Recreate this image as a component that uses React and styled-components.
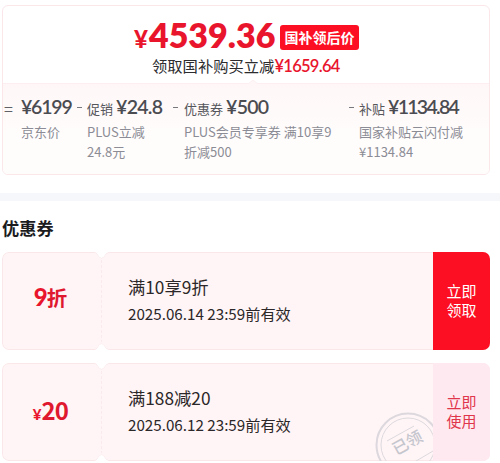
import React from 'react';
import styled, { createGlobalStyle } from 'styled-components';

const GlobalStyle = createGlobalStyle`
* { box-sizing: border-box; }
body {
  margin: 0;
  background: #fff;
  overflow: hidden;
  font-family: "Noto Sans CJK SC", sans-serif;
}
`
const Page = styled.div`
width: 500px;
height: 463px;
overflow: hidden;
background: #fff;
`
const PriceCard = styled.section`
width: 488px;
height: 170px;
margin: 5px 0 0 2px;
border: 1px solid #fbe7ea;
border-radius: 6px;
overflow: hidden;
`
const PriceTop = styled.div`
height: 77px;
padding-top: 10px;
`
const PriceRow = styled.div`
display: flex;
align-items: center;
height: 38px;
padding-left: 131px;
`
const Amount = styled.span`
font-family: Lato, "Noto Sans CJK SC", sans-serif;
font-size: ${(props) => props.$size}px;
font-weight: ${(props) => props.$weight || 700};
line-height: 1;
letter-spacing: ${(props) => props.$spacing || 0}px;
color: ${(props) => props.$color || '#e9152d'};
white-space: nowrap;
`
const BigPrice = styled.div`
display: flex;
align-items: baseline;
width: 146px;
gap: 1px;
`
const Tag = styled.span`
width: 79px;
height: 25px;
border-radius: 3px;
background: #fd0f23;
color: #fff;
font-size: 14px;
font-weight: 700;
line-height: 24px;
text-align: center;
margin-top: 4px;
`
const SubRow = styled.div`
display: flex;
align-items: baseline;
padding-left: 149px;
font-size: 15.3px;
line-height: 22px;
color: #2c2c2e;
`
const Formula = styled.div`
position: relative;
display: grid;
grid-template-columns: 18px 66px 97px 175px 1fr;
height: 91px;
padding-top: 12px;
border-top: 1px solid #fdeff1;
background: linear-gradient(#fff7f7, #fffcfc 55%);
`
const Caret = styled.svg`
position: absolute;
left: 243px;
top: -5px;
`
const Sign = styled.span`
font-size: 16px;
line-height: 24px;
color: #606166;
padding-left: 1px;
`
const Term = styled.div`
position: relative;
`
const TermHead = styled.div`
display: flex;
align-items: baseline;
gap: 3px;
height: 26px;
padding-top: 1px;
font-size: 13px;
line-height: 24px;
color: #55565b;
white-space: nowrap;
`
const Minus = styled.i`
position: absolute;
left: ${(props) => -props.$offset}px;
top: 11px;
width: 5px;
height: 1px;
background: #77787d;
`
const TermNote = styled.div`
font-size: 13px;
line-height: 20px;
color: #8b8c95;
white-space: pre;
`
const Band = styled.div`
height: 8px;
margin-top: 18px;
background: #f5f7fb;
`
const Title = styled.h2`
margin: 0;
padding: 14px 0 0 2px;
height: 51px;
font-size: 17.2px;
font-weight: 700;
line-height: 26px;
color: #1c1c1e;
`
const Coupon = styled.article`
position: relative;
display: flex;
width: 488px;
height: 98px;
margin: 0 0 13px 2px;
border-radius: 7px;
background: #fff5f6;
overflow: hidden;
`
const Outline = styled.svg`
position: absolute;
inset: 0;
`
const Value = styled.div`
position: relative;
display: flex;
align-items: baseline;
justify-content: center;
width: 100px;
padding-top: ${(props) => props.$top}px;
padding-right: 3px;
color: #e0182f;
font-size: ${(props) => props.$size}px;
font-weight: 700;
letter-spacing: ${(props) => props.$spacing || 0}px;
line-height: 28px;
`
const Info = styled.div`
position: relative;
flex: 1;
padding: 21px 0 0 26px;
color: #2c2728;
`
const Rule = styled.div`
font-size: 17.3px;
line-height: 27px;
`
const Expiry = styled.div`
font-size: 15.2px;
line-height: 26px;
`
const Action = styled.button`
position: relative;
width: 57px;
border: 0;
padding: 0 0 2px;
background: ${(props) => props.$used ? '#ffe9f0' : '#fd0f23'};
color: ${(props) => props.$used ? '#e0364b' : '#fff'};
font-family: inherit;
font-size: 15px;
line-height: 19.5px;
cursor: pointer;
`
const Stamp = styled.svg`
position: absolute;
right: 57px;
bottom: 0;
`

const terms = [
  { name: '', value: '¥6199', note: '京东价', spacing: -1.2 },
  { name: '促销', value: '¥24.8', note: 'PLUS立减\n24.8元', spacing: -0.7, offset: 10 },
  { name: '优惠券', value: '¥500', note: 'PLUS会员专享券 满10享9\n折减500', spacing: -0.7, offset: 11 },
  { name: '补贴', value: '¥1134.84', note: '国家补贴云闪付减\n¥1134.84', spacing: -1.7, offset: 10 },
]

const CouponCard = ({ value, unit, suffix, rule, expiry, action, used }) => (
  <Coupon>
    <Outline width="488" height="98" fill="none">
      <path
        d="M7 .5H93Q95 .5 96 3Q99.5 9 103 3Q104 .5 107 .5H481A6.5 6.5 0 0 1 487.5 7V91A6.5 6.5 0 0 1 481 97.5H107Q104 97.5 103 95Q99.5 89 96 95Q95 97.5 93 97.5H7A6.5 6.5 0 0 1 .5 91V7A6.5 6.5 0 0 1 7 .5Z"
        stroke="#fae7ea"
      />
      <path d="M93 0Q95 .5 96 3Q99.5 9 103 3Q104 .5 107 0ZM93 98Q95 97.5 96 95Q99.5 89 103 95Q104 97.5 107 98Z" fill="#fff" />
      <path d="M99.5 8V90" stroke="#fbeaed" strokeDasharray="3 2" />
    </Outline>
    <Value $size={suffix ? 20.5 : 24} $spacing={suffix ? 0 : -0.8} $top={suffix ? 31 : 33}>
      {unit && <Amount $size={15} $weight={900}>{unit}</Amount>}
      {suffix ? <Amount $size={24} $weight={900} $spacing={-1}>{value}</Amount> : value}
      {suffix}
    </Value>
    <Info>
      <Rule>{rule}</Rule>
      <Expiry>{expiry}</Expiry>
    </Info>
    {used && (
      <Stamp width="58" height="49" viewBox="0 0 58 49" fill="none">
        <g stroke="#dcd8dd">
          <circle cx="33" cy="33" r="31.5" strokeWidth="2" />
          <circle cx="33" cy="33" r="27" />
          <path d="M12 29L39 14M31 55L58 39" />
        </g>
        <text
          x="33.5"
          y="36.5"
          transform="rotate(-29 33 33)"
          textAnchor="middle"
          fontSize="16"
          fontWeight="500"
          fill="#c5c6ce"
        >
          已领
        </text>
      </Stamp>
    )}
    <Action $used={used}>{action[0]}<br />{action[1]}</Action>
  </Coupon>
)

const App = () => {
  return (
    <Page>
      <GlobalStyle />
      <PriceCard>
        <PriceTop>
          <PriceRow>
            <BigPrice>
              <Amount $size={24} $weight={900}>¥</Amount>
              <Amount $size={34} $weight={800}>4539.36</Amount>
            </BigPrice>
            <Tag>国补领后价</Tag>
          </PriceRow>
          <SubRow>
            领取国补购买立减
            <Amount $size={16.5} $weight={600} $spacing={-0.7}>¥1659.64</Amount>
          </SubRow>
        </PriceTop>
        <Formula>
          <Caret width="14" height="6" fill="none">
            <path d="M2 5L7 1L12 5" fill="#fff7f7" stroke="#fdeff1" />
          </Caret>
          <Sign>=</Sign>
          {terms.map((term) => (
            <Term key={term.value}>
              {term.offset && <Minus $offset={term.offset} />}
              <TermHead>
                {term.name}
                <Amount $size={19.5} $weight={600} $spacing={term.spacing} $color="#4b4c51">{term.value}</Amount>
              </TermHead>
              <TermNote>{term.note}</TermNote>
            </Term>
          ))}
        </Formula>
      </PriceCard>
      <Band />
      <Title>优惠券</Title>
      <CouponCard value="9" suffix="折" rule="满10享9折" expiry="2025.06.14 23:59前有效" action={['立即', '领取']} />
      <CouponCard unit="¥" value="20" rule="满188减20" expiry="2025.06.12 23:59前有效" action={['立即', '使用']} used />
    </Page>
  );
}

export default App;
